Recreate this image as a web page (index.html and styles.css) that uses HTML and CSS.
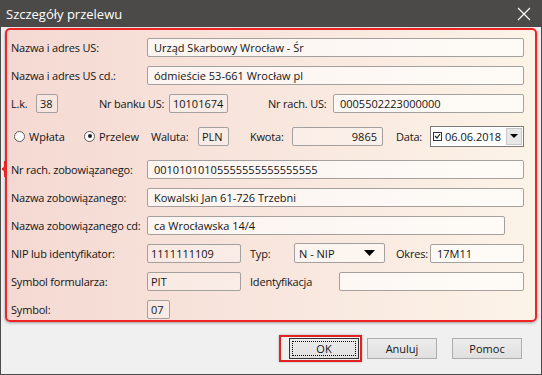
FILE: index.html
```html
<!DOCTYPE html>
<html lang="pl">
<head>
    <meta charset="UTF-8">
    <title>Szczegóły przelewu</title>
    <link rel="stylesheet" href="styles.css">
</head>
<body>
<div class="window">
    <div class="titlebar">
        <span class="title">Szczegóły przelewu</span>
        <svg class="close" width="14" height="14" viewBox="0 0 14 14">
            <path d="M1 1 L13 13 M13 1 L1 13" stroke="#fff" stroke-width="1.2" fill="none"/>
        </svg>
    </div>
    <div class="body">
        <div class="panel">
            <svg class="notch" width="8" height="16" viewBox="0 0 8 16">
                <path d="M4 0 L4 5 Q4 8 1 8 Q4 8 4 11 L4 16" stroke="#ee2424" stroke-width="2" fill="none"/>
            </svg>

            <div class="row">
                <label class="lbl">Nazwa i adres US:</label>
                <div class="field wide">Urząd Skarbowy Wrocław - Śr</div>
            </div>
            <div class="row">
                <label class="lbl">Nazwa i adres US cd.:</label>
                <div class="field wide">ódmieście 53-661 Wrocław pl</div>
            </div>
            <div class="row">
                <label class="lk">L.k.</label>
                <div class="field ro w-lk">38</div>
                <label class="nrbank">Nr banku US:</label>
                <div class="field ro w-bank">10101674</div>
                <label class="nrrach">Nr rach. US:</label>
                <div class="field w-rach">0005502223000000</div>
            </div>
            <div class="row row-gap">
                <span class="radio"></span><span class="rlabel">Wpłata</span>
                <span class="radio checked"></span><span class="rlabel">Przelew</span>
                <label class="waluta">Waluta:</label>
                <div class="field ro w-pln">PLN</div>
                <label class="kwota">Kwota:</label>
                <div class="field ro w-kwota num">9865</div>
                <label class="data">Data:</label>
                <div class="datepick">
                    <span class="chk">
                        <svg width="7" height="7" viewBox="0 0 7 7"><path d="M1 3 L3 5 L6 1" stroke="#222" stroke-width="1.2" fill="none"/></svg>
                    </span>
                    <span class="date">06.06.2018</span>
                    <span class="dd"><svg width="8" height="5" viewBox="0 0 8 5"><path d="M0 0 H8 L4 4 Z" fill="#000"/></svg></span>
                </div>
            </div>
            <div class="row row-gap">
                <label class="lbl">Nr rach. zobowiązanego:</label>
                <div class="field wide">00101010105555555555555555</div>
            </div>
            <div class="row">
                <label class="lbl">Nazwa zobowiązanego:</label>
                <div class="field wide">Kowalski Jan 61-726 Trzebni</div>
            </div>
            <div class="row">
                <label class="lbl">Nazwa zobowiązanego cd:</label>
                <div class="field w-cd">ca Wrocławska 14/4</div>
            </div>
            <div class="row">
                <label class="lbl">NIP lub identyfikator:</label>
                <div class="field ro w-nip">1111111109</div>
                <label class="typ">Typ:</label>
                <div class="select">N - NIP<svg width="11" height="6" viewBox="0 0 11 6"><path d="M0 0 H11 L5.5 6 Z" fill="#000"/></svg></div>
                <label class="okres">Okres:</label>
                <div class="field w-okres">17M11</div>
            </div>
            <div class="row">
                <label class="lbl">Symbol formularza:</label>
                <div class="field ro w-nip">PIT</div>
                <label class="ident">Identyfikacja</label>
                <div class="field w-ident"></div>
            </div>
            <div class="row">
                <label class="lbl">Symbol:</label>
                <div class="field ro w-sym">07</div>
            </div>
        </div>

        <div class="buttons">
            <div class="focus-ring"><button class="btn default"><span>OK</span></button></div>
            <button class="btn">Anuluj</button>
            <button class="btn">Pomoc</button>
        </div>
    </div>
</div>
</body>
</html>
```

FILE: styles.css
```css
body {
    margin: 0;
    padding: 0;
    background: #f0f0f0;
    font-family: 'Open Sans', 'Noto Sans', sans-serif;
    font-size: 11px;
    color: #151515;
}

label {
    letter-spacing: -0.2px;
}

.window {
    width: 542px;
    height: 375px;
    box-sizing: border-box;
    border: 1px solid #4a4a4a;
    border-top: none;
    background: #f0f0f0;
    display: flex;
    flex-direction: column;
}

.titlebar {
    height: 27px;
    margin: 0 -1px;
    background: #4b4a49;
    display: flex;
    align-items: center;
    justify-content: space-between;
    padding: 0 11px 0 6px;
}

.title {
    color: #fff;
    font-size: 13px;
}

.body {
    flex: 1;
    padding: 1px 4px 0 4px;
    display: flex;
    flex-direction: column;
}

.panel {
    position: relative;
    height: 294px;
    box-sizing: border-box;
    border: 2px solid #ee2424;
    border-radius: 5px;
    padding: 3px 0 0 4px;
    background: linear-gradient(90deg, #f4d9d2 0%, #f8e6dd 50%, #fcf3e7 100%);
    box-shadow: 0 1px 3px rgba(0, 0, 0, 0.35);
}

.notch {
    position: absolute;
    left: -6px;
    top: 131px;
}

.row {
    height: 28px;
    display: flex;
    align-items: center;
}

.row-gap {
    margin-top: 5px;
}

.lbl {
    width: 136px;
    flex: none;
}

.field {
    height: 19px;
    box-sizing: border-box;
    border: 1px solid #a5a0a0;
    border-radius: 2px;
    background: rgba(255, 255, 255, 0.65);
    padding: 0 0 0 6px;
    line-height: 17px;
    white-space: nowrap;
    overflow: hidden;
    flex: none;
}

.field.ro {
    background: rgba(255, 255, 255, 0.3);
    padding-left: 3px;
}

.field.num {
    text-align: right;
    padding-right: 5px;
}

.wide { width: 377px; }
.w-cd { width: 358px; }
.w-lk { width: 22px; }
.w-bank { width: 59px; }
.w-rach { width: 191px; }
.w-pln { width: 31px; }
.w-kwota { width: 91px; }
.w-nip { width: 94px; }
.w-okres { width: 94px; }
.w-ident { width: 185px; }
.w-sym { width: 23px; }

.lk { width: 25px; flex: none; }
.nrbank { margin-left: 41px; width: 70px; flex: none; }
.nrrach { margin-left: 40px; width: 65px; flex: none; }

.radio {
    width: 11px;
    height: 11px;
    box-sizing: border-box;
    border: 1px solid #5a5a5a;
    border-radius: 50%;
    background: #fff;
    position: relative;
    flex: none;
    margin-left: 3px;
}

.radio.checked::after {
    content: '';
    position: absolute;
    left: 2.5px;
    top: 2.5px;
    width: 4px;
    height: 4px;
    border-radius: 50%;
    background: #222;
}

.rlabel {
    margin-left: 4px;
    width: 52px;
    flex: none;
}

.waluta { width: 47px; flex: none; }
.kwota { margin-left: 21px; width: 42px; flex: none; }
.data { margin-left: 13px; width: 34px; flex: none; }

.datepick {
    width: 94px;
    height: 21px;
    box-sizing: border-box;
    border: 1px solid #7a7a7a;
    background: #fff;
    display: flex;
    align-items: center;
    flex: none;
}

.chk {
    width: 9px;
    height: 9px;
    box-sizing: border-box;
    border: 1px solid #333;
    margin-left: 2px;
    display: flex;
    align-items: center;
    justify-content: center;
}

.date {
    margin-left: 3px;
    flex: 1;
}

.dd {
    width: 16px;
    height: 17px;
    margin-right: 1px;
    box-sizing: border-box;
    border: 1px solid #c8c8c8;
    background: #e8e8e8;
    display: flex;
    align-items: center;
    justify-content: center;
}

.typ { margin-left: 9px; width: 44px; flex: none; }

.select {
    width: 91px;
    height: 20px;
    box-sizing: border-box;
    border: 1px solid #a5a0a0;
    border-radius: 2px;
    background: rgba(255, 255, 255, 0.5);
    padding: 0 9px 0 4px;
    display: flex;
    align-items: center;
    justify-content: space-between;
    flex: none;
}

.okres { margin-left: 11px; width: 34px; flex: none; }
.ident { margin-left: 9px; width: 89px; flex: none; }

.buttons {
    flex: 1;
    display: flex;
    align-items: center;
    justify-content: flex-end;
    padding: 0 15px 0 0;
    gap: 8px;
}

.btn {
    width: 70px;
    height: 21px;
    border: 1px solid #adadad;
    background: linear-gradient(#ececec, #e0e0e0);
    font-family: 'Open Sans', 'Noto Sans', sans-serif;
    font-size: 11px;
    color: #151515;
    padding: 0;
}

.btn:last-child {
    margin-left: 7px;
}

.focus-ring {
    border: 2px solid #e32020;
    padding: 1px;
    margin-right: -3px;
    box-shadow: 0 0 2px rgba(0, 0, 0, 0.3);
}

.btn.default {
    display: block;
    border-color: #333;
    padding: 2px;
}

.btn.default span {
    display: block;
    height: 100%;
    box-sizing: border-box;
    border: 1px dotted #000;
    line-height: 13px;
}
```
